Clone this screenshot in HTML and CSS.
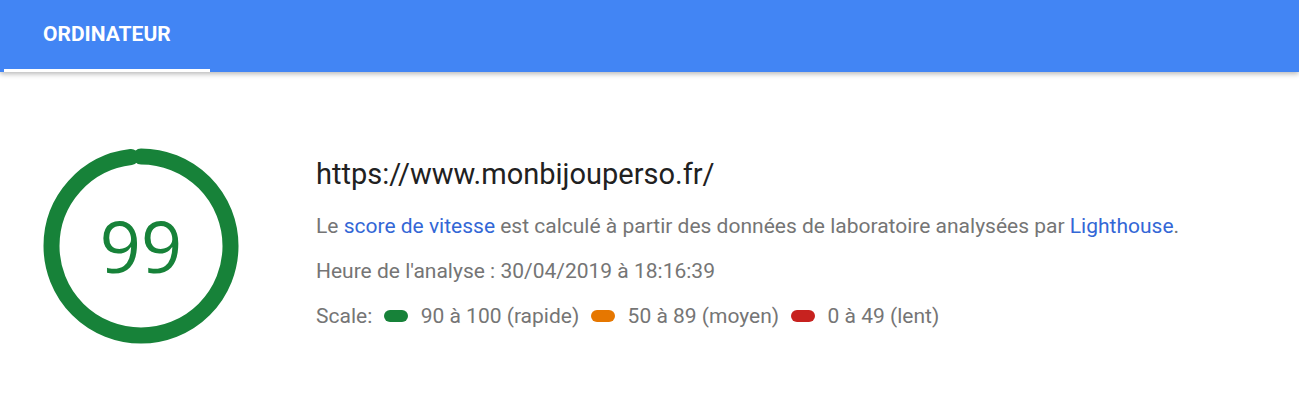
FILE: index.html
```html
<!DOCTYPE html>
<html lang="fr">
<head>
<meta charset="utf-8">
<link rel="stylesheet" href="styles.css">
</head>
<body>
<header class="topbar">
  <nav class="tabs">
    <div class="tab tab-active">ORDINATEUR</div>
  </nav>
</header>
<main class="summary">
  <div class="gauge">
    <svg class="gauge-svg" width="196" height="196" viewBox="0 0 196 196">
      <circle class="gauge-arc" cx="98" cy="98" r="89.5" transform="rotate(-90 98 98)"></circle>
    </svg>
    <div class="gauge-value">99</div>
  </div>
  <div class="info">
    <h1 class="url">https://www.monbijouperso.fr/</h1>
    <p class="line">Le <a class="link">score de vitesse</a> est calculé à partir des données de laboratoire analysées par <a class="link">Lighthouse</a>.</p>
    <p class="line">Heure de l'analyse : 30/04/2019 à 18:16:39</p>
    <p class="line scale">Scale: <span class="pill pill-green"></span> 90 à 100 (rapide) <span class="pill pill-orange"></span> 50 à 89 (moyen) <span class="pill pill-red"></span> 0 à 49 (lent)</p>
  </div>
</main>
</body>
</html>
```

FILE: styles.css
```css
html, body {
  margin: 0;
  padding: 0;
  background: #fff;
  font-family: Roboto, "Liberation Sans", sans-serif;
}
.topbar {
  background: #4285f4;
  height: 72px;
  box-shadow: 0 2px 5px rgba(0,0,0,0.28);
  position: relative;
}
.tabs {
  display: flex;
  padding-left: 4px;
  height: 72px;
}
.tab {
  width: 206px;
  box-sizing: border-box;
  padding-left: 39px;
  padding-top: 22px;
  color: #fff;
  font-weight: 700;
  font-size: 21px;
  line-height: 24px;
}
.tab-active {
  border-bottom: 3px solid #fff;
}
.summary {
  display: flex;
  padding-top: 76px;
  padding-left: 43px;
}
.gauge {
  position: relative;
  width: 196px;
  height: 196px;
  flex: none;
}
.gauge-svg {
  display: block;
}
.gauge-arc {
  fill: none;
  stroke: #178239;
  stroke-width: 16;
  stroke-linecap: round;
  stroke-dasharray: 551.3 562.3;
}
.gauge-value {
  position: absolute;
  inset: 0;
  display: flex;
  align-items: center;
  justify-content: center;
  font-family: "Open Sans", sans-serif;
  font-size: 72px;
  color: #178239;
  padding-bottom: 2px;
}
.info {
  margin-left: 77px;
  padding-top: 9px;
}
.url {
  margin: 0;
  font-weight: 400;
  font-size: 29px;
  line-height: 34px;
  color: #212121;
}
.line {
  margin: 0;
  margin-top: 11px;
  font-size: 21px;
  line-height: 34px;
  color: #757575;
}
.url + .line {
  margin-top: 18px;
}
.link {
  color: #3367d6;
  text-decoration: none;
}
.pill {
  display: inline-block;
  width: 24px;
  height: 12px;
  border-radius: 6px;
  margin: 0 7px;
  vertical-align: 1px;
}
.pill-green { background: #178239; }
.pill-orange { background: #e67700; }
.pill-red { background: #c7221f; }
```
